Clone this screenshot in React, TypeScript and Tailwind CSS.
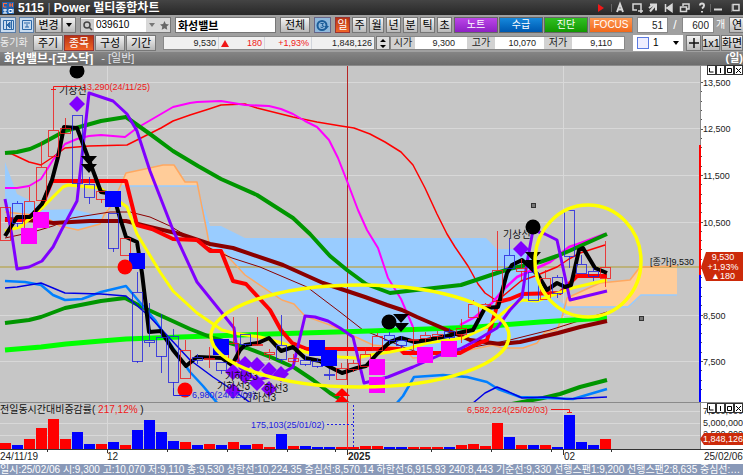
import React from 'react';

type Candle = [top: number, bottom: number, high: number, low: number, up: 0 | 1];

const candles: Candle[] = [
  [207, 240, 207, 240, 1], [203, 223, 201, 227, 0], [201, 228, 187, 228, 1], [167, 200, 142, 200, 1],
  [130, 156, 87, 156, 1], [128, 133, 118, 133, 1], [115, 183, 115, 187, 0], [184, 197, 177, 204, 0],
  [191, 199, 191, 203, 1], [213, 248, 213, 252, 0], [238, 255, 238, 255, 1], [292, 361, 272, 363, 0],
  [340, 342, 303, 347, 0], [337, 356, 314, 373, 0], [336, 382, 329, 389, 0], [350, 378, 340, 378, 1],
  [357, 360, 354, 364, 0], [358, 359, 347, 368, 1], [362, 370, 362, 374, 0], [343, 361, 317, 361, 1],
  [334, 344, 334, 346, 0], [344, 345, 317, 346, 1], [352, 354, 349, 360, 1], [345, 359, 315, 362, 0],
  [358, 361, 354, 364, 1], [360, 364, 356, 366, 0], [361, 366, 358, 368, 0], [374, 375, 369, 380, 0],
  [368, 379, 363, 379, 1], [363, 369, 360, 372, 1], [354, 366, 348, 366, 1], [336, 350, 333, 352, 1],
  [335, 340, 332, 344, 0], [340, 345, 336, 348, 0], [339, 340, 327, 352, 1], [335, 338, 332, 342, 1],
  [334, 336, 331, 340, 1], [331, 337, 328, 339, 0], [328, 334, 319, 343, 1], [304, 317, 300, 317, 1],
  [304, 306, 303, 309, 1], [270, 301, 231, 301, 1], [255, 268, 238, 268, 0], [268, 271, 259, 280, 1],
  [272, 300, 262, 300, 0], [278, 299, 270, 299, 1], [277, 293, 275, 298, 0], [210, 256, 210, 268, 0],
  [264, 273, 255, 273, 0], [271, 276, 268, 281, 0], [267, 278, 241, 287, 1],
];

const volumeTops = [
  443, 445, 439, 428, 419, 439, 432, 444, 444, 442, 445, 430, 420, 432, 441, 442, 445,
  444, 445, 442, 445, 444, 447, 434, 446, 446, 447, 447, 447, 447, 446, 446, 447, 447,
  447, 447, 447, 447, 445, 444, 446, 423, 437, 445, 445, 445, 447, 415, 442, 445, 439,
];
const volumeColors = 'rbrrrrbbrbrbbbbrbrbrbrrbrbbbrrrrbbrrrbrrrrbrbrbbbbr';

const lines = [
  { color: '#ffa860', width: 1.5, points: '5,212 43,216 60,226 78,230 100,224 104,215 112,205 126,173 145,169 163,165 174,165 185,182 197,182 207,232 210,249 221,250 233,262 245,275 270,292 282,300 294,304 305,316 330,325 373,345 403,348 413,358 440,356 493,345 503,348 523,348 537,343 545,332 557,330 562,317 567,298 580,292 600,283 630,280 640,267 677,266' },
  { color: '#8b0000', width: 1, points: '5,238 33,232 53,226 72,218 110,212 130,212 150,217 170,226 180,232 205,246 232,258 260,267 307,287 340,312 363,330 380,337 403,347 420,353 453,351 510,340 550,330 607,312' },
  { color: '#ff0000', width: 1.5, points: '5,153 12,154 29,162 41,165 53,157 65,148 89,146 127,145 149,134 161,128 173,121 190,115 209,109 221,105 245,104 257,108 281,114 293,117 317,122 341,126 354,128 370,134 385,142 401,152 413,165 425,188 437,214 447,234 455,247 468,266 478,284 485,293 497,301 509,291 521,281 535,276 557,267 569,259 580,253 605,245' },
  { color: '#00ff00', width: 5, points: '5,350 41,347 66,344 101,341 126,339 180,337 303,333 370,331 427,329 477,327 540,322 607,318' },
  { color: '#009600', width: 4, points: '5,323 29,320 41,317 65,308 101,301 125,298 142,307 190,329 213,338 247,348 273,358 295,368 313,380 330,393 350,405' },
  { color: '#009600', width: 4, points: '512,404 543,398 560,394 580,387 607,380' },
  { color: '#0080ff', width: 2.5, points: '5,281 25,282 41,285 53,295 65,300 82,299 101,292 126,286 137,299 155,320 173,348 190,372 203,386 218,404' },
  { color: '#0080ff', width: 2.5, points: '396,404 403,396 414,377 443,375 467,377 487,382 498,389 520,397 573,399 607,389' },
  { color: '#0000e6', width: 1.5, points: '5,288 17,287 41,283 65,293 101,294 126,296 150,317 190,360 213,377 237,393 252,404' },
  { color: '#0000e6', width: 1.5, points: '473,403 485,393 497,387 507,391 522,398 545,397 567,399 607,397' },
  { color: '#ff00ff', width: 2, points: '5,188 17,188 29,186 41,179 53,160 65,144 77,139 89,136 101,135 125,137 137,128 149,121 161,114 173,107 190,103 197,102 221,101 245,105 269,106 281,109 293,114 305,121 317,127 329,140 338,158 347,181 358,210 367,230 378,248 388,278 401,299 413,327' },
  { color: '#ff00ff', width: 2.5, points: '460,325 475,317 492,303 503,290 517,277 550,262 569,247 581,243 605,234' },
  { color: '#8b0000', width: 4, points: '5,219 40,221 53,223 90,221 126,221 150,227 180,234 210,244 233,248 283,265 323,283 347,291 365,297 387,305 402,310 417,317 447,330 470,340 500,344 520,342 558,333 580,327 607,321' },
  { color: '#009600', width: 4, points: '5,153 17,152 30,149 41,144 65,131 101,121 126,117 150,134 173,151 198,166 221,179 257,195 293,218 310,234 330,256 347,270 366,284 390,293 425,289 461,285 509,269 540,262 557,256 569,251 607,234' },
  { color: '#ff0000', width: 4, points: '5,220 25,220 41,208 52,181 126,181 137,225 152,229 173,239 197,240 210,251 221,251 233,281 246,284 270,310 281,330 292,343 307,349 400,349 404,353 460,353 475,345 487,340 495,313 498,302 510,299 522,294 560,293 568,285 577,276 607,276' },
  { color: '#ffff00', width: 3, points: '5,231 20,227 43,207 63,187 68,185 100,188 127,207 137,234 160,272 173,291 197,313 222,330 233,333 260,337 282,343 305,352 340,357 357,358 370,355 390,352 410,348 427,343 463,338 487,327 498,317 510,307 522,300 537,301 553,295 572,288 607,280' },
  { color: '#8000ff', width: 3, points: '5,199 8,214 12,236 17,269 29,267 42,261 53,247 61,231 77,201 83,147 89,93 113,101 127,114 137,131 150,171 173,230 197,282 222,313 234,328 238,358 240,368 257,380 281,374 293,367 305,316 315,317 328,321 340,328 353,337 364,383 388,377 413,367 440,355 460,349 477,340 497,328 510,310 522,297 527,263 533,230 545,234 557,240 570,300 607,291' },
  { color: '#000000', width: 4, points: '5,236 17,217 30,217 42,204 52,180 58,157 64,127 77,128 80,136 89,160 101,192 113,194 120,218 126,237 137,242 142,273 149,332 161,331 173,350 186,366 197,357 222,358 232,365 240,350 245,345 258,343 269,338 281,351 293,347 305,358 320,361 330,367 342,373 357,368 366,366 378,353 390,342 401,338 415,342 427,340 447,336 463,332 473,330 485,308 498,307 507,273 512,265 522,260 530,267 538,275 547,290 557,283 565,287 571,285 579,250 583,248 595,268 607,273' },
];

const blueSquares = [[113, 199], [137, 261], [221, 347], [317, 348], [329, 358]];
const pinkSquares = [[41, 220], [29, 236], [377, 367], [377, 385], [425, 355], [449, 349]];
const diamonds = [[77, 104], [521, 249], [245, 364], [257, 365], [269, 370], [281, 374], [233, 372], [245, 376], [257, 383], [269, 389], [233, 391]];
const downArrows = [[89, 160], [89, 168], [401, 318], [401, 327], [533, 256], [533, 264]];
const priceLabels: [string, number][] = [['13,500', 82], ['12,500', 128], ['11,500', 175], ['10,500', 222], ['8,500', 315], ['7,500', 361]];
const floorTags = [[225, 380], [217, 390], [243, 401]];

const btn = 'flex h-4 shrink-0 items-center justify-center whitespace-nowrap border border-[#777] bg-gradient-to-b from-[#f4f4f4] to-[#b9b9b9] text-[11px] leading-none text-black';
const field = 'h-4 shrink-0 border border-[#888] bg-white px-1 text-right text-[10px] leading-[14px] text-[#222] outline-none';

const PaneButtons = ({ y }: { y: number }) => (
  <g fill="#fff" stroke="#333" strokeWidth="1">
    {[707, 716, 725, 734].map((x) => (
      <rect key={x} x={x + 0.5} y={y + 0.5} width="8" height="9" />
    ))}
    <path d={`M709.5 ${y + 3}v4h4M720.5 ${y + 3}v5M727.5 ${y + 3.5}h4v4h-4zM736 ${y + 3}l5 5m0-5l-5 5`} fill="none" stroke="#000" />
  </g>
);

const PriceChart = () => (
  <svg viewBox="0 65 743 338" className="block h-auto w-full" fontSize="9" role="img" aria-label="일봉 차트">
    <rect x="0" y="65" width="700" height="338" fill="#c6c6c6" />
    <rect x="701" y="65" width="42" height="338" fill="#fff" />
    <g stroke="#d8d8d8" strokeWidth="1">
      {priceLabels.map(([label, y]) => <path key={label} d={`M0 ${y + 0.5}H700`} />)}
      <path d="M107.5 65V403M563.5 65V403" />
    </g>
    <path d="M5 162L17 194 33 202 43 210 72 209 93 214 104 215 100 224 78 230 60 226 43 216 5 212z" fill="#99ccff" />
    <path d="M122 186L126 173 145 169 163 165 174 165 185 182 197 182 198 186z" fill="#ffcc99" />
    <path d="M122 186H198" stroke="#99ccff" strokeWidth="1.5" />
    <path d="M197 185L210 226H221L245 238H486L497 249H530L540 288 562 303 572 307 562 317 557 330 545 332 537 343 523 348H503L493 345 440 356 413 358 403 348 373 345 330 325 305 316 294 304 282 300 270 292 245 275 221 250 210 249z" fill="#99ccff" />
    <path d="M567 307V298L580 292 600 283 630 280 640 266H677V295H641L628 306z" fill="#ffcc99" />
    <path d="M567 307H628L641 295H677" fill="none" stroke="#99ccff" strokeWidth="1.5" />

    <path d="M0 267H700" stroke="#b8aa62" strokeWidth="1.5" />
    <path d="M347.5 65V403" stroke="#b52525" strokeWidth="1" />
    {lines.map((l, i) => (
      <polyline key={i} points={l.points} fill="none" stroke={l.color} strokeWidth={l.width} strokeLinejoin="round" />
    ))}
    <g fill="none" strokeWidth="1">
      {candles.map(([top, bottom, high, low, up], i) => {
        const x = 5 + i * 12;
        return (
          <g key={i} stroke={up ? '#f01818' : '#2020e0'} strokeOpacity="0.8">
            <path d={`M${x + 0.5} ${high}V${top}M${x + 0.5} ${bottom}V${low}`} />
            <rect x={x - 4.5} y={top + 0.5} width="10" height={bottom - top} />
          </g>
        );
      })}
    </g>

    {blueSquares.map(([x, y]) => <rect key={`${x}-${y}`} x={x - 8} y={y - 8} width="16" height="16" fill="#0000ff" />)}
    {pinkSquares.map(([x, y]) => <rect key={`${x}-${y}`} x={x - 8} y={y - 8} width="16" height="16" fill="#ff00ff" />)}
    {diamonds.map(([x, y]) => <path key={`${x}-${y}`} d={`M${x} ${y - 8}l8 8-8 8-8-8z`} fill="#8000ff" />)}
    {downArrows.map(([x, y]) => <path key={`${x}-${y}`} d={`M${x - 8} ${y - 4}h16l-8 9z`} fill="#000" />)}
    {[[77, 71], [389, 322], [533, 227]].map(([x, y]) => <circle key={x} cx={x} cy={y} r="7.5" fill="#000" />)}
    {[[125, 267], [185, 390]].map(([x, y]) => <circle key={x} cx={x} cy={y} r="7.5" fill="#ff0000" />)}
    <path d="M342 388l8 8h-16zM342 395l8 8h-16z" fill="#ff0000" />

    <g fontSize="10" fill="#111">
      <text x="59" y="94">기상선</text>
      <text x="503" y="238">기상선</text>
      {floorTags.map(([x, y], i) => <text key={i} x={x} y={y}>기하선3</text>)}
      <text x="264" y="392">하선3</text>
    </g>
    <path d="M53.5 90V86.5H81M51 89.5h5" fill="none" stroke="#f01818" />
    <text x="82" y="90" fill="#f01818">13,290(24/11/25)</text>
    <path d="M173.5 388V395.5H190" fill="none" stroke="#2020e0" />
    <text x="192" y="398" fill="#2020e0">6,980(24/12/09)</text>
    <text x="650" y="265" fill="#111">[종가]9,530</text>

    <g fill="none" stroke="#ffff00" strokeWidth="3.5">
      <ellipse cx="360" cy="336" rx="149" ry="51" />
      <ellipse cx="588" cy="261" rx="53" ry="56" />
    </g>
    <g fill="#777" stroke="#333">
      <rect x="531.5" y="203.5" width="4" height="4" />
      <rect x="639.5" y="316.5" width="4" height="4" />
    </g>

    <path d="M0 65.5H743M0 402.5H743" stroke="#8a8a8a" />
    <path d="M700.5 65V145" stroke="#888" />
    <path d="M700 145V275" stroke="#ff0000" strokeWidth="2" />
    <path d="M700 275V402" stroke="#0000ff" strokeWidth="2" />
    <g stroke="#555">
      {Array.from({ length: 34 }, (_, i) => (
        <path key={i} d={`M701 ${Math.round(82 + i * 9.3) + 0.5}h${i % 5 ? 1 : 2}`} />
      ))}
    </g>
    {priceLabels.map(([label, y]) => <text key={label} x="703" y={y + 4} fill="#222">{label}</text>)}
    <path d="M701 267L706 252H743V281H706z" fill="#cc2a0a" />
    <g fill="#fff" textAnchor="middle">
      <text x="723" y="260">9,530</text>
      <text x="723" y="270">+1,93%</text>
      <text x="723" y="279">▲180</text>
    </g>
    <PaneButtons y={65} />
  </svg>
);

const VolumeChart = () => (
  <svg viewBox="0 403 743 61" className="block h-auto w-full" fontSize="9" role="img" aria-label="거래량">
    <rect x="0" y="403" width="700" height="46" fill="#c6c6c6" />
    <rect x="0" y="449" width="743" height="15" fill="#fff" />
    <path d="M0 411.5H700M0 423.5H700M0 435.5H700M107.5 403V449M563.5 403V449" stroke="#d8d8d8" />
    {volumeTops.map((top, i) => (
      <rect key={i} x={i * 12} y={top} width="11" height={449 - top} fill={volumeColors[i] === 'r' ? '#ff0000' : '#0000ff'} />
    ))}
    <path d="M0 449.5H743M47.5 449v3M107.5 449v4M167.5 449v3M227.5 449v3M287.5 449v3M335.5 449v3M431.5 449v3M491.5 449v3M551.5 449v3M563.5 449v6M611.5 449v3M347.5 449v6" stroke="#333" />
    <path d="M347.5 403V449" stroke="#ff2020" />
    <path d="M700.5 403V449" stroke="#888" />
    <text x="0" y="413" fill="#111" fontSize="10">전일동시간대비증감률( <tspan fill="#f01818">217,12%</tspan> )</text>
    <path d="M327 424.5H353M353.5 405v44" stroke="#2020e0" strokeDasharray="2 2" />
    <text x="251" y="428" fill="#2020e0">175,103(25/01/02)</text>
    <text x="467" y="413" fill="#f01818">6,582,224(25/02/03)</text>
    <path d="M551 409.5H569.5V413M567 412.5h5" fill="none" stroke="#f01818" />
    <g fill="#222">
      <text x="703" y="414">7,500,000</text>
      <text x="703" y="426">5,000,000</text>
      <text x="703" y="437">2,500,000</text>
      <g fontSize="10">
        <text x="0" y="460">24/11/19</text>
        <text x="107" y="460">12</text>
        <text x="348" y="460" fontWeight="bold">2025</text>
        <text x="564" y="460">02</text>
        <text x="704" y="460">25/02/06</text>
      </g>
    </g>
    <path d="M700 439L704 433H743V445H704z" fill="#cc2a0a" />
    <text x="703" y="442" fill="#fff">1,848,126</text>
    <PaneButtons y={403} />
  </svg>
);

const TitleBar = () => (
  <header className="flex h-[15px] items-center justify-between bg-gradient-to-b from-[#444] to-[#282828] text-white">
    <div className="flex items-center gap-1 pl-0.5">
      <svg width="12" height="12" viewBox="0 0 12 12" aria-hidden="true">
        <rect width="12" height="12" fill="#1f62b0" />
        <path d="M1 1.5h4M1.5 1v4h3M8 1v4M10.5 1v4M7 3h4" stroke="#ff6a3c" fill="none" />
        <path d="M1 8h4M3 7v4M1 11h4M7 7.5h3v3H7zM11 7v4" stroke="#fff" fill="none" />
      </svg>
      <h1 className="whitespace-nowrap text-xs font-bold leading-none">
        5115 <span className="font-normal text-gray-400">|</span> Power 멀티종합차트
      </h1>
    </div>
    <svg width="146" height="15" viewBox="597 0 146 15" fill="none" stroke="#d8d8d8" strokeWidth="1.5" aria-hidden="true">
      <path d="M598 4l6 4-6 4z" fill="#f01818" stroke="none" />
      <path d="M611.5 4v8M710.5 4v8M731.5 4v8" stroke="#666" strokeWidth="1" />
      <path d="M617 12l3-8 3 8M618 9.5h4" strokeWidth="2" />
      <path d="M641 9V4h-8v6h4M641 9v4M638 11h5" />
      <path d="M650 4.5h6v6M656 4.5l-6 7M649 8l4-3" strokeWidth="2" />
      <path d="M665.5 4v8M672 4.5v7L667 8z" fill="#d8d8d8" />
      <path d="M683 6V4h6v5h-2M680.5 7h6v4.5h-6z" />
      <path d="M700 5.5q0-2 2-2t2 2q0 1.5-2 3M702 11v1.5" strokeWidth="2" />
      <path d="M714 9.5h8" strokeWidth="2" />
      <path d="M733 4.5h6v6h-6z" />
    </svg>
  </header>
);

const SearchRow = () => (
  <div className="flex h-[19px] items-center bg-[#a0a0a0] pt-px">
    <div className="flex gap-[3px]">
      <button aria-label="왼쪽 패널" className="flex h-4 w-4 items-center justify-center border border-[#5b7ea8] bg-[#c9dcf0]">
        <svg width="11" height="10" fill="none" stroke="#2d69a8"><path d="M.5.5h10v9H.5zM3.5 1v8M8.5 1v8" /><path d="M7 2v6L4 5z" fill="#2d69a8" /></svg>
      </button>
      <button aria-label="목록" className="flex h-4 w-[15px] items-center justify-center border border-[#5b7ea8] bg-[#c9dcf0]">
        <svg width="10" height="10" fill="none" stroke="#2d69a8"><path d="M.5.5h9v9H.5zM2 3h6M3 7h4M5 4v3" /></svg>
      </button>
    </div>
    <div className="ml-px flex">
      <button className={`${btn} w-[27px]`}>변경</button>
      <button aria-label="변경 목록" className={`${btn} w-3.5`}>
        <svg width="6" height="4"><path d="M0 0h6L3 4z" /></svg>
      </button>
    </div>
    <div className="ml-1 flex h-4 w-[91px] shrink-0 items-center border border-[#777] bg-white">
      <svg width="13" height="13" className="shrink-0 bg-[#ccc]" fill="none" stroke="#444" strokeWidth="1.5"><circle cx="6" cy="6" r="3" /><path d="M8 8l3 3" /></svg>
      <input aria-label="종목코드" defaultValue="039610" className="h-3.5 w-0 flex-1 px-0.5 text-[10px] leading-[14px] outline-none" />
      <button aria-label="최근 종목" className="flex h-full w-3 items-center justify-center bg-[#d8d8d8]">
        <svg width="6" height="4" fill="#777"><path d="M0 0h6L3 4z" /></svg>
      </button>
      <button aria-label="관심 종목" className="flex h-full w-3 items-center justify-center bg-[#d8d8d8]">
        <svg width="9" height="9" viewBox="0 0 10 10" fill="#666"><path d="M5 0l1.5 3.4 3.5.4-2.6 2.4.7 3.6L5 8 1.9 9.8l.7-3.6L0 3.8l3.5-.4z" /></svg>
      </button>
    </div>
    <input aria-label="종목명" defaultValue="화성밸브" className="ml-1 h-4 w-[101px] shrink-0 border border-[#777] bg-white px-0.5 text-[11px] font-bold leading-[14px] outline-none" />
    <button className={`${btn} ml-1 w-[30px]`}>전체</button>
    <button aria-label="새로고침" className="ml-1 flex h-4 w-[17px] shrink-0 items-center justify-center border border-[#668] bg-[#8fb8dc]">
      <svg width="13" height="13" viewBox="0 0 13 13" fill="none">
        <circle cx="6" cy="6.5" r="4.5" stroke="#1c5d99" strokeWidth="2" />
        <path d="M8 7h5l-2.5 3z" fill="#1c5d99" />
        <path d="M4.5 4.5h3L6 6.3q2 0 1.3 1.7-1.2 1-2.8 0" stroke="#1c5d99" />
      </svg>
    </button>
    <div className="ml-1 flex gap-0.5">
      <button className="flex h-4 w-[15px] items-center justify-center border border-[#933] bg-gradient-to-b from-[#b83210] to-[#f06428] text-[11px] leading-none text-white">일</button>
      {['주', '월', '년', '분', '틱', '초'].map((t) => <button key={t} className={`${btn} w-[15px]`}>{t}</button>)}
    </div>
    <div className="ml-0.5 flex gap-px text-[10px] leading-none text-white">
      <button className="h-4 w-11 border border-[#666] bg-gradient-to-b from-[#bb45e8] to-[#8e20c4]">노트</button>
      <button className="h-4 w-11 border border-[#666] bg-gradient-to-b from-[#1688dc] to-[#0058b0]">수급</button>
      <button className="h-4 w-11 border border-[#666] bg-gradient-to-b from-[#30c020] to-[#119800]">진단</button>
      <button className="h-4 w-11 border border-[#888] bg-gradient-to-b from-[#ff9850] to-[#f06818]">FOCUS</button>
    </div>
    <input aria-label="현재 봉" defaultValue="51" className={`${field} ml-1 w-[31px]`} />
    <span className="w-3.5 shrink-0 text-center text-xs leading-none text-white">/</span>
    <input aria-label="전체 봉" defaultValue="600" className={`${field} w-8`} />
    <span className="ml-0.5 w-3 shrink-0 text-[10px] leading-none text-white">개</span>
    <button className={`${btn} ml-px w-4 text-[10px]`}>연</button>
  </div>
);

const quoteLabel = 'flex items-center justify-center bg-[#d2d2d2] text-[10px]';
const quoteCell = 'flex items-center justify-end bg-white';

const QuoteRow = () => (
  <div className="flex h-[18px] items-center bg-[#a0a0a0]">
    <span className="w-[33px] shrink-0 text-[10px] leading-none text-[#eee]">동기화</span>
    <div className="flex gap-px">
      <button className={`${btn} w-[30px]`}>주기</button>
      <button className="h-4 w-[30px] border border-[#933] bg-gradient-to-b from-[#b83210] to-[#f06428] text-[11px] leading-none text-white">종목</button>
      <button className={`${btn} w-[30px]`}>구성</button>
      <button className={`${btn} w-[30px]`}>기간</button>
    </div>
    <dl className="ml-[7px] flex h-3.5 shrink-0 border border-[#888] bg-[#f0f0f0] text-[9px] leading-none text-[#222]">
      <dd className="flex w-[55px] items-center justify-end border-r border-gray-300 pr-0.5">9,530</dd>
      <dd className="flex w-[46px] items-center justify-between border-r border-gray-300 pl-0.5 pr-0.5 text-[#f01818]">
        <svg width="8" height="7" fill="#f01818"><path d="M4 0l4 7H0z" /></svg>180
      </dd>
      <dd className="flex w-[47px] items-center justify-end border-r border-gray-300 pr-0.5 text-[#f01818]">+1,93%</dd>
      <dd className="flex w-[62px] items-center justify-end pr-0.5">1,848,126</dd>
    </dl>
    <button aria-label="호가 이동" className="ml-px flex h-3.5 w-3.5 shrink-0 items-center justify-center border border-[#777] bg-[#ddd]">
      <svg width="6" height="9"><path d="M0 3l3-3 3 3zM0 6l3 3 3-3z" /></svg>
    </button>
    <dl className="flex h-3.5 shrink-0 border border-[#888] text-[9px] leading-none text-[#222]">
      <dt className={`${quoteLabel} w-6`}>시가</dt>
      <dd className={`${quoteCell} w-[52px] pr-3`}>9,300</dd>
      <dt className={`${quoteLabel} w-7`}>고가</dt>
      <dd className={`${quoteCell} w-[49px] pr-2`}>10,070</dd>
      <dt className={`${quoteLabel} w-7`}>저가</dt>
      <dd className={`${quoteCell} w-[52px] pr-3`}>9,110</dd>
    </dl>
    <div className="relative ml-2 h-4 w-[50px] shrink-0 bg-white">
      <select aria-label="분할 번호" className="block h-4 w-full appearance-none py-0 pl-5 text-[10px] leading-4 outline-none"><option>1</option></select>
      <span className="pointer-events-none absolute left-1 top-0.5 h-3 w-3 border border-[#5a7ae0] bg-[#eef]" />
      <svg width="6" height="4" className="pointer-events-none absolute right-1 top-1.5"><path d="M0 0h6L3 4z" /></svg>
    </div>
    <button aria-label="추가" className={`${btn} ml-[3px] w-[15px]`}>
      <svg width="10" height="10" stroke="#111" strokeWidth="1.5"><path d="M5 0v10M0 5h10" /></svg>
    </button>
    <button className={`${btn} ml-px w-[18px] text-[10px]`}>1x1</button>
    <button className={`${btn} ml-px w-[22px] text-[10px]`}>화면</button>
  </div>
);

const App = () => {
  return (
    <main className="w-full overflow-hidden bg-white font-['Liberation_Sans','Noto_Sans_CJK_KR',sans-serif]">
      <TitleBar />
      <SearchRow />
      <QuoteRow />
      <div className="flex h-[13px] items-center justify-between bg-gradient-to-b from-[#858585] to-[#6c6c6c] pl-1 text-[11px] leading-none text-white">
        <h2 className="flex gap-2">
          <b className="text-xs leading-none">화성밸브-[코스닥]</b>
          <span className="text-gray-200">- [일반]</span>
        </h2>
        <b>(일)</b>
      </div>
      <PriceChart />
      <VolumeChart />
      <footer className="h-[11px] truncate bg-[#8999b8] text-[10px] leading-[11px] text-white">
        일시:25/02/06 시:9,300 고:10,070 저:9,110 종:9,530 상한선:10,224.35 중심선:8,570.14 하한선:6,915.93 240:8,443 기준선:9,330 선행스팬1:9,200 선행스팬2:8,635 중심선:9,407 중...
      </footer>
    </main>
  );
};

export default App;
